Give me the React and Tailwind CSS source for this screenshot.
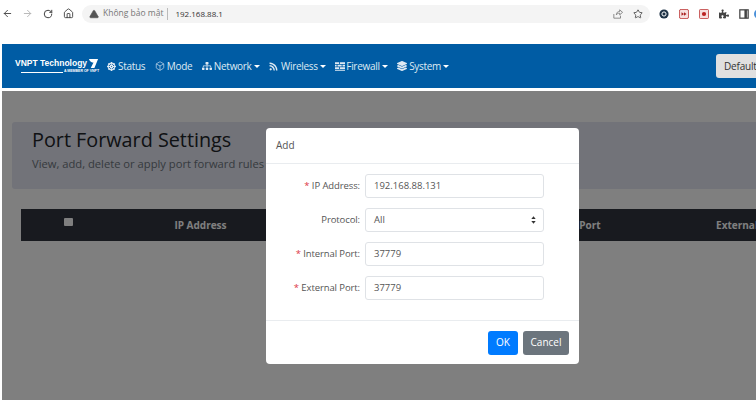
import React from "react";
import { ArrowLeft, ArrowRight, RotateCw, Home, Star, TriangleAlert, Box } from "lucide-react";
import { FaDharmachakra, FaSitemap, FaRss, FaLayerGroup, FaPuzzlePiece } from "react-icons/fa";

const BrickIcon = ({ className }) => (
  <svg viewBox="0 0 12 10" fill="currentColor" className={className}>
    <path d="M0 0h5v2H0zM6 0h6v2H6zM0 3h2v2H0zM3 3h5v2H3zM9 3h3v2H9zM0 6h5v2H0zM6 6h6v2H6zM0 9h12v1H0z" />
  </svg>
);

const navItems = [
  { label: "Status", icon: <FaDharmachakra className="w-[9px] h-[9px] mr-[2px]" /> },
  { label: "Mode", icon: <Box strokeWidth={1.5} className="w-[10px] h-[10px] mr-[2px]" /> },
  { label: "Network", icon: <FaSitemap className="w-[10px] h-[10px] mr-[2px]" />, caret: true },
  { label: "Wireless", icon: <FaRss className="w-[9px] h-[9px] mr-[3px]" />, caret: true },
  { label: "Firewall", icon: <BrickIcon className="w-[10px] h-[9px] mr-[1px]" />, caret: true },
  { label: "System", icon: <FaLayerGroup className="w-[10px] h-[10px] mr-[2px]" />, caret: true },
];

const Caret = () => (
  <span className="ml-[2px] w-0 h-0 border-x-[3px] border-x-transparent border-t-[3px] border-t-white" />
);

const BrowserBar = () => (
  <div className="h-[24px] shrink-0 pt-[3px] flex items-center bg-white text-[#5f6368]">
    <ArrowLeft size={11} strokeWidth={2} className="ml-[2px] shrink-0 text-[#444]" />
    <ArrowRight size={11} strokeWidth={2} className="ml-[9px] shrink-0 text-[#b5b5b5]" />
    <RotateCw size={10} strokeWidth={2.4} className="ml-[10px] shrink-0 text-[#444]" />
    <Home size={11} strokeWidth={2} className="ml-[10px] shrink-0 text-[#444]" />
    <div className="ml-[8px] w-[568px] h-[18px] shrink-0 bg-[#f4f4f4] rounded-full flex items-center pl-[7px] text-[8.5px] font-['Open_Sans',sans-serif]">
      <TriangleAlert size={10} fill="#555" strokeWidth={1.5} className="text-[#555]" />
      <span className="ml-[4px] text-[#777]">Không bảo mật</span>
      <span className="ml-[4px] w-px h-[12px] bg-[#bbb]" />
      <span className="ml-[7px] text-[8px] text-[#333]">192.168.88.1</span>
      <svg viewBox="0 0 12 12" className="ml-auto w-[10px] h-[10px] text-[#777]" fill="none" stroke="currentColor" strokeWidth="1">
        <path d="M1 6v5h8V8M4 7c0-3 2-4 4-4V1l3.500 3L8 7V5C6 5 5 5.500 4 7z" />
      </svg>
      <Star size={10} strokeWidth={2} className="ml-[10px] mr-[7px] text-[#444]" />
    </div>
    <svg viewBox="0 0 12 12" className="ml-[9px] w-[10px] h-[10px] shrink-0">
      <circle cx="6" cy="6" r="5.500" fill="#1f3347" />
      <circle cx="6" cy="6" r="2.500" fill="none" stroke="#fff" strokeWidth="1.200" />
    </svg>
    <svg viewBox="0 0 12 12" className="ml-[10px] w-[10px] h-[10px] shrink-0">
      <rect x="0.500" y="0.500" width="11" height="11" rx="2" fill="#f6dede" stroke="#b33" />
      <path d="M3 4l3 2-3 2zM6 4l3 2-3 2z" fill="#a22" />
    </svg>
    <svg viewBox="0 0 12 12" className="ml-[10px] w-[10px] h-[10px] shrink-0">
      <rect x="0.500" y="0.500" width="11" height="11" rx="1.500" fill="#f6dede" stroke="#b33" />
      <circle cx="6" cy="6" r="2.500" fill="#b22" />
    </svg>
    <FaPuzzlePiece size={10} className="ml-[10px] shrink-0 text-[#444]" />
    <svg viewBox="0 0 12 12" className="ml-[10px] w-[10px] h-[10px] shrink-0" fill="none" stroke="#444" strokeWidth="1.500">
      <rect x="1" y="1" width="10" height="10" />
      <path d="M8 1v10" strokeWidth="3" />
    </svg>
    <span className="ml-[5px] w-[10px] h-[10px] shrink-0 rounded-full bg-[#4a90d9]" />
  </div>
);

const Logo = () => (
  <div className="w-[92px] ml-[13px] shrink-0 font-['Liberation_Sans',sans-serif] text-white">
    <div className="flex items-center h-[12px]">
      <span className="text-[8.5px] font-bold whitespace-nowrap">VNPT Technology</span>
      <svg viewBox="0 0 12 12" className="w-[11px] h-[11px] ml-px">
        <path d="M1 1h10L7 11H3l3-6c-2 0-4-1-5-4z" fill="#fff" />
      </svg>
    </div>
    <div className="flex items-center h-[5px]">
      <span className="ml-[6px] w-[42px] h-px bg-white" />
      <span className="text-[3.500px] ml-px font-bold whitespace-nowrap">A MEMBER OF VNPT</span>
    </div>
  </div>
);

const Header = () => (
  <div className="ml-[2px] h-[44px] bg-[#005ca4] flex items-center overflow-hidden shrink-0">
    <Logo />
    <nav className="flex items-center text-[10px] text-[#dfeaf3] font-['Open_Sans',sans-serif] tracking-[-0.3px]">
      {navItems.map(({ label, icon, caret }) => (
        <a key={label} className="flex items-center mr-[9.5px] whitespace-nowrap">
          {icon}
          {label}
          {caret && <Caret />}
        </a>
      ))}
    </nav>
    <button className="ml-auto mr-[-30px] w-[70px] h-[24px] text-left pl-[8px] bg-[#e0e0e0] rounded-[3px] text-[10px] tracking-[-0.2px] text-[#333] font-['Open_Sans',sans-serif]">
      Default
    </button>
  </div>
);

const Field = ({ label, required, value, select }) => (
  <div className="flex items-center h-[24px]">
    <label className="w-[94px] text-right text-[9.5px] tracking-[-0.1px] text-[#555] whitespace-nowrap">
      {required && <span className="text-[#dc3545]">* </span>}
      {label}:
    </label>
    <div className="ml-[5px] w-[179px] h-[24px] flex items-center justify-between pl-[8px] pr-[7px] border border-[#dfe2e6] rounded-[3px] bg-white text-[9.5px] text-[#555]">
      {value}
      {select && (
        <svg viewBox="0 0 8 12" className="w-[5px] h-[8px]" fill="#333">
          <path d="M4 0l3.500 4.500h-7zM4 12L.5 7.500h7z" />
        </svg>
      )}
    </div>
  </div>
);

const AddModal = () => (
  <div className="ml-[264px] mt-[37px] w-[313px] h-[236px] flex flex-col bg-white rounded-[4px] font-['Open_Sans',sans-serif]">
    <div className="h-[36px] flex items-center pl-[10px] border-b border-[#e9ecef] text-[10px] text-[#555]">Add</div>
    <div className="flex-1 flex flex-col gap-[10px] pt-[10px]">
      <Field required label="IP Address" value="192.168.88.131" />
      <Field select label="Protocol" value="All" />
      <Field required label="Internal Port" value="37779" />
      <Field required label="External Port" value="37779" />
    </div>
    <div className="h-[44px] flex items-center justify-end gap-[5px] pr-[10px] border-t border-[#e9ecef] text-[10px] text-white">
      <button className="w-[30px] h-[24px] bg-[#007bff] rounded-[3px]">OK</button>
      <button className="w-[46px] h-[24px] bg-[#6c757d] rounded-[3px]">Cancel</button>
    </div>
  </div>
);

const Content = () => (
  <div className="relative flex-1 ml-[2px] mt-[3px] overflow-hidden bg-white font-['Open_Sans',sans-serif]">
    <div className="mt-[31px] ml-[10px] mr-[-200px] h-[67px] bg-[#e4e6f2] pl-[20px] pt-[4px] rounded-[3px]">
      <h1 className="text-[19.8px] leading-[28px] font-medium text-[#212529]">Port Forward Settings</h1>
      <p className="mt-[2px] text-[11.2px] text-[#6c757d]">View, add, delete or apply port forward rules</p>
    </div>
    <div className="mt-[20px] ml-[19px] mr-[-200px] h-[32px] bg-[#30343f] flex items-center text-[10px] font-bold text-white">
      <div className="w-[94px] flex justify-center pb-[6px]">
        <span className="w-[9px] h-[8px] bg-white rounded-[1px]" />
      </div>
      <div className="w-[171px] text-center">IP Address</div>
      <div className="w-[195px]" />
      <div className="w-[175px] text-center">Internal Port</div>
      <div className="w-[186px] text-center">External Port</div>
    </div>
    <div className="absolute inset-0 bg-black/50">
      <AddModal />
    </div>
  </div>
);

const App = () => (
  <div className="w-[756px] h-[400px] flex flex-col overflow-hidden bg-white">
    <BrowserBar />
    <div className="h-[20px] shrink-0" />
    <Header />
    <Content />
  </div>
);

export default App;
